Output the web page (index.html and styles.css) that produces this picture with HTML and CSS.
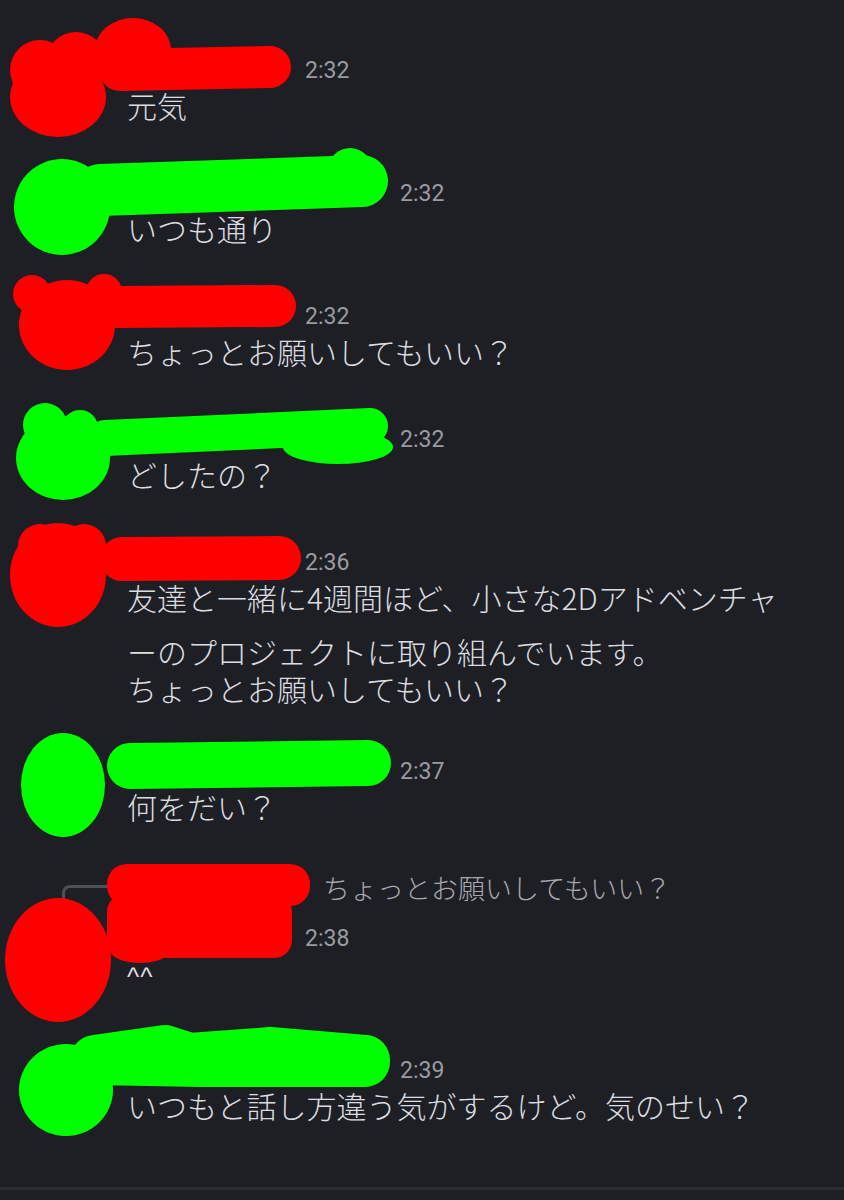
FILE: index.html
```html
<!DOCTYPE html>
<html lang="ja">
<head>
<meta charset="utf-8">
<title>Chat</title>
<link rel="stylesheet" href="styles.css">
</head>
<body>
<div class="page">
  <main class="chat">
    <div class="msg">
      <div class="avatar"></div>
      <div class="body">
        <div class="head"><span class="name name-r"></span><span class="time">2:32</span></div>
        <div class="text">元気</div>
      </div>
    </div>
    <div class="msg">
      <div class="avatar"></div>
      <div class="body">
        <div class="head"><span class="name name-g"></span><span class="time">2:32</span></div>
        <div class="text">いつも通り</div>
      </div>
    </div>
    <div class="msg">
      <div class="avatar"></div>
      <div class="body">
        <div class="head"><span class="name name-r"></span><span class="time">2:32</span></div>
        <div class="text">ちょっとお願いしてもいい？</div>
      </div>
    </div>
    <div class="msg">
      <div class="avatar"></div>
      <div class="body">
        <div class="head"><span class="name name-g"></span><span class="time">2:32</span></div>
        <div class="text">どしたの？</div>
      </div>
    </div>
    <div class="msg msg-long">
      <div class="avatar"></div>
      <div class="body">
        <div class="head"><span class="name name-r"></span><span class="time">2:36</span></div>
        <div class="text line-first">友達と一緒に4週間ほど、小さな2Dアドベンチャ</div>
        <div class="text line-next">ーのプロジェクトに取り組んでいます。<br>ちょっとお願いしてもいい？</div>
      </div>
    </div>
    <div class="msg msg-before-reply">
      <div class="avatar"></div>
      <div class="body">
        <div class="head"><span class="name name-g"></span><span class="time">2:37</span></div>
        <div class="text">何をだい？</div>
      </div>
    </div>
    <div class="reply-group">
      <div class="reply">
        <div class="spine-col"><div class="spine"></div></div>
        <div class="reply-body">
          <span class="reply-name"></span>
          <span class="reply-text">ちょっとお願いしてもいい？</span>
        </div>
      </div>
      <div class="msg msg-after-reply">
        <div class="avatar"></div>
        <div class="body">
          <div class="head"><span class="name name-r"></span><span class="time">2:38</span></div>
          <div class="text"><span class="carets">^^</span></div>
        </div>
      </div>
    </div>
    <div class="msg">
      <div class="avatar"></div>
      <div class="body">
        <div class="head"><span class="name name-g"></span><span class="time">2:39</span></div>
        <div class="text">いつもと話し方違う気がするけど。気のせい？</div>
      </div>
    </div>
  </main>
  <footer class="composer"></footer>
</div>

<svg class="scribbles" width="844" height="1200" viewBox="0 0 844 1200" aria-hidden="true">
  <g fill="#ff0000" stroke="#ff0000" stroke-linecap="round" stroke-linejoin="round">
    <!-- 1 -->
    <ellipse cx="58" cy="97" rx="48" ry="40" stroke="none"/>
    <circle cx="40" cy="70" r="30" stroke="none"/>
    <circle cx="76" cy="62" r="30" stroke="none"/>
    <ellipse cx="133" cy="50" rx="38" ry="32" stroke="none"/>
    <line x1="120" y1="70" x2="270" y2="67" stroke-width="42"/>
    <!-- 3 -->
    <ellipse cx="67" cy="325" rx="48" ry="45" stroke="none"/>
    <circle cx="32" cy="294" r="19" stroke="none"/>
    <circle cx="104" cy="292" r="18" stroke="none"/>
    <line x1="115" y1="307" x2="275" y2="306" stroke-width="42"/>
    <!-- 5 -->
    <ellipse cx="58" cy="575" rx="48" ry="52" stroke="none"/>
    <circle cx="40" cy="546" r="22" stroke="none"/>
    <circle cx="84" cy="546" r="22" stroke="none"/>
    <line x1="122" y1="559" x2="279" y2="558" stroke-width="44"/>
    <!-- 7 -->
    <rect x="107" y="864" width="203" height="42" rx="20" stroke="none"/>
    <rect x="107" y="894" width="185" height="64" rx="18" stroke="none"/>
    <ellipse cx="140" cy="950" rx="30" ry="13" stroke="none"/>
    <ellipse cx="58" cy="960" rx="53" ry="62" stroke="none"/>
  </g>
  <g fill="#00ff00" stroke="#00ff00" stroke-linecap="round" stroke-linejoin="round">
    <!-- 2 -->
    <ellipse cx="62" cy="207" rx="48" ry="48" stroke="none"/>
    <line x1="100" y1="190" x2="362" y2="181" stroke-width="52"/>
    <circle cx="350" cy="170" r="22" stroke="none"/>
    <!-- 4 -->
    <ellipse cx="63" cy="458" rx="47" ry="42" stroke="none"/>
    <circle cx="45" cy="425" r="22" stroke="none"/>
    <circle cx="80" cy="428" r="18" stroke="none"/>
    <line x1="105" y1="438" x2="370" y2="426" stroke-width="36"/>
    <ellipse cx="338" cy="447" rx="55" ry="17" stroke="none"/>
    <!-- 6 -->
    <ellipse cx="63" cy="785" rx="42" ry="52" stroke="none"/>
    <line x1="130" y1="766" x2="368" y2="763" stroke-width="46"/>
    <!-- 8 -->
    <ellipse cx="66" cy="1090" rx="47" ry="46" stroke="none"/>
    <path d="M95 1060 L165 1050 L190 1058 L270 1052 L365 1060 L365 1062 L200 1062 Z" stroke-width="50"/>
  </g>
</svg>
</body>
</html>
```

FILE: styles.css
```css
html, body {
  margin: 0;
  padding: 0;
  background: #1e1f24;
}

body {
  position: relative;
  width: 844px;
  height: 1200px;
  overflow: hidden;
  font-family: "Noto Sans CJK JP", "Noto Sans", sans-serif;
  color: #dcdde1;
}

.page {
  display: flex;
  flex-direction: column;
  min-height: 1200px;
}

.chat {
  flex: 1;
  padding-top: 53px;
}

.msg {
  display: grid;
  grid-template-columns: 127px 1fr;
  margin-bottom: 51px;
}

.avatar {
  width: 1px;
}

.head {
  display: flex;
  align-items: center;
  height: 36px;
  gap: 12px;
  margin-bottom: -4px;
}

.name {
  display: inline-block;
  height: 24px;
}

.name-r { width: 166px; }
.name-g { width: 261px; }

.time {
  font-family: Roboto, "Liberation Sans", sans-serif;
  font-size: 23px;
  color: #9a9ba2;
  line-height: 36px;
}

.text {
  font-size: 30px;
  font-weight: 300;
  line-height: 40px;
  white-space: nowrap;
  color: #dcdde1;
}

.line-first {
  margin-bottom: 16px;
}

.line-next {
  line-height: 37px;
}

.carets {
  font-family: "Liberation Sans", sans-serif;
  font-size: 26px;
  letter-spacing: 1px;
}

.msg-long {
  margin-bottom: 47px;
}

.msg-before-reply {
  margin-bottom: 42px;
}

.reply {
  display: grid;
  grid-template-columns: 127px 1fr;
  height: 36px;
  margin-bottom: 17px;
}

.spine {
  margin-left: 62px;
  margin-top: 17px;
  width: 46px;
  height: 22px;
  border-left: 3px solid #4e5057;
  border-top: 3px solid #4e5057;
  border-top-left-radius: 8px;
  box-sizing: border-box;
}

.reply-body {
  display: flex;
  align-items: center;
  gap: 12px;
}

.reply-name {
  display: inline-block;
  width: 184px;
}

.reply-text {
  font-size: 27px;
  font-weight: 300;
  color: #a8a9b0;
  white-space: nowrap;
  line-height: 36px;
}

.msg-after-reply {
  margin-bottom: 56px;
}

.composer {
  height: 10px;
  border-top: 3px solid #2a2b30;
  background: #1f2025;
}

.scribbles {
  position: absolute;
  top: 0;
  left: 0;
  pointer-events: none;
}
```
